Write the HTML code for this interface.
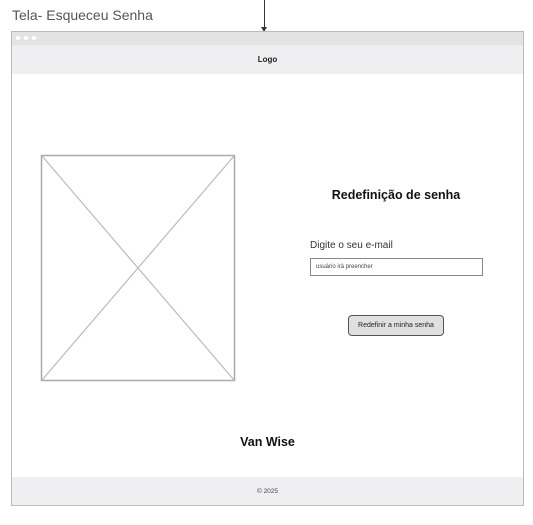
<!DOCTYPE html><html><head><style>
body{margin:0;width:533px;height:525px;background:#fff;font-family:"Liberation Sans",sans-serif;position:relative;overflow:hidden}
.a{position:absolute}
</style></head><body>
<div class="a" style="left:12px;top:7px;font-size:14px;color:#555">Tela- Esqueceu Senha</div>
<div class="a" style="left:264px;top:0;width:1px;height:28px;background:#333"></div>
<div class="a" style="left:261px;top:27px;width:0;height:0;border-left:3px solid transparent;border-right:3px solid transparent;border-top:5px solid #333"></div>
<div class="a" style="left:11px;top:31px;width:511px;height:473px;border:1px solid #bbb;background:#fff"></div>
<div class="a" style="left:12px;top:32px;width:511px;height:13px;background:#e3e3e3"></div>
<div class="a" style="left:16px;top:36px;width:4px;height:4px;border-radius:50%;background:#fff"></div>
<div class="a" style="left:24px;top:36px;width:4px;height:4px;border-radius:50%;background:#fff"></div>
<div class="a" style="left:32px;top:36px;width:4px;height:4px;border-radius:50%;background:#fff"></div>
<div class="a" style="left:12px;top:45px;width:511px;height:29px;background:#efeff1;text-align:center;line-height:29px;font-size:8px;font-weight:bold;color:#222">Logo</div>
<svg class="a" style="left:40px;top:154px" width="196" height="228"><rect x="1.5" y="1.5" width="193" height="225" fill="#fff" stroke="#aaa" stroke-width="1.5"/><line x1="2" y1="2" x2="194" y2="226" stroke="#bbb" stroke-width="1.2"/><line x1="194" y1="2" x2="2" y2="226" stroke="#bbb" stroke-width="1.2"/></svg>
<div class="a" style="left:296px;top:188px;width:200px;text-align:center;font-size:12.5px;font-weight:bold;color:#111">Redefinição de senha</div>
<div class="a" style="left:310px;top:240px;font-size:10px;color:#333">Digite o seu e-mail</div>
<div class="a" style="left:310px;top:258px;width:171px;height:16px;border:1px solid #888;font-size:6px;line-height:17px;color:#444;text-indent:5px">usuário irá preencher</div>
<div class="a" style="left:348px;top:315px;width:94px;height:19px;border:1px solid #555;border-radius:4px;background:#e0e0e0;text-align:center;line-height:19px;font-size:7px;color:#222">Redefinir a minha senha</div>
<div class="a" style="left:12px;top:435px;width:511px;text-align:center;font-size:12.5px;font-weight:bold;color:#111">Van Wise</div>
<div class="a" style="left:12px;top:477px;width:511px;height:28px;background:#efeff1;text-align:center;line-height:29px;font-size:6.5px;color:#444">© 2025</div>
</body></html>
